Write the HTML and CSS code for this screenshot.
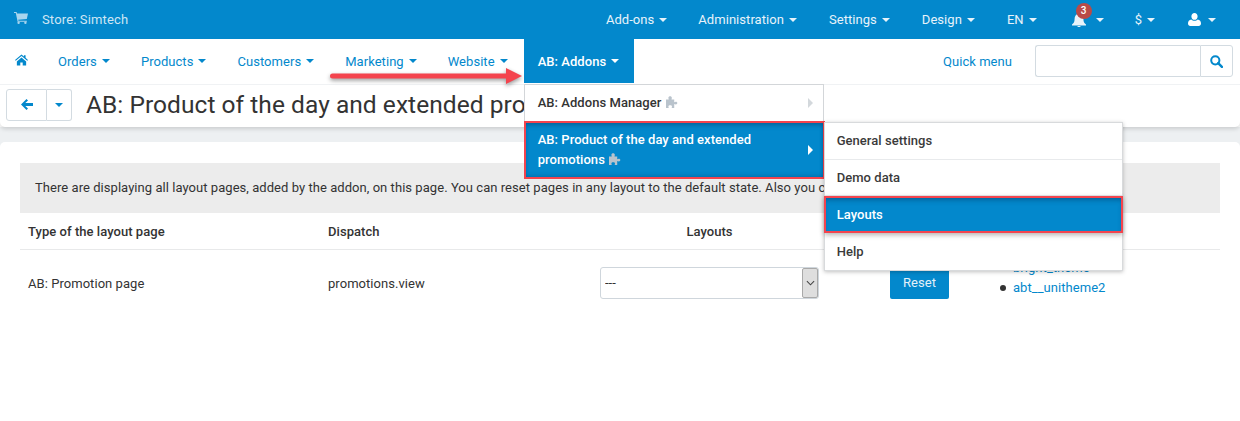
FILE: index.html
```html
<!DOCTYPE html>
<html lang="en">
<head>
<meta charset="utf-8">
<title>AB: Product of the day and extended promotions</title>
<link rel="stylesheet" href="styles.css">
</head>
<body>
<svg class="defs" width="0" height="0" aria-hidden="true">
  <symbol id="puzzle" viewBox="0 0 16 14"><path d="M1 4h3.2C4.2 3.4 3.8 3 3.8 2.2 3.8 1 4.8.4 5.8.4s2 .6 2 1.8c0 .8-.4 1.2-.4 1.8h3.2v3.2c.6 0 1-.5 1.9-.5 1.1 0 1.7.8 1.7 1.6s-.6 1.6-1.7 1.6c-.9 0-1.3-.5-1.9-.5V14H7.6c0-.6.4-1 .4-1.7 0-1-.9-1.5-2.1-1.500s-2.100.5-2.100 1.500c0 .7.4 1.100.4 1.700H1z"/></symbol>
  <symbol id="caret-right" viewBox="0 0 6 12"><path d="M0 0l6 6-6 6z"/></symbol>
</svg>

<header class="topbar">
  <div class="store">
    <svg class="cart" viewBox="0 0 14 12"><path d="M0 0h2.600l.4 1.500h11l-1.200 5.400-8.600.8.3 1.100h8.400v1H3.600L1.800 1H0z"/><circle cx="4.600" cy="10.800" r="1.200"/><circle cx="11.400" cy="10.800" r="1.200"/></svg>
    <span>Store: Simtech</span>
  </div>
  <nav class="topnav">
    <a class="top-item t-addons">Add-ons<i class="caret"></i></a>
    <a class="top-item t-admin">Administration<i class="caret"></i></a>
    <a class="top-item t-settings">Settings<i class="caret"></i></a>
    <a class="top-item t-design">Design<i class="caret"></i></a>
    <a class="top-item t-lang">EN<i class="caret"></i></a>
    <a class="top-item t-bell">
      <span class="bell-wrap">
        <svg class="bell" viewBox="0 0 14 14"><path d="M7 0c.7 0 1 .5 1 1 2.300.5 3.400 2.300 3.400 5 0 3 1 4.300 2.600 5.600v.9H0v-.9C1.600 10.300 2.600 9 2.600 6c0-2.700 1.100-4.500 3.400-5 0-.5.300-1 1-1zM5.300 13h3.400c0 .6-.8 1-1.700 1s-1.700-.4-1.700-1z"/></svg>
        <b class="badge">3</b>
      </span><i class="caret"></i>
    </a>
    <a class="top-item t-cur">$<i class="caret"></i></a>
    <a class="top-item t-user">
      <svg class="user" viewBox="0 0 13 13"><path d="M6.500 0C8.300 0 9.600 1.500 9.600 3.400S8.300 6.800 6.500 6.800 3.400 5.300 3.400 3.400 4.700 0 6.500 0zM3.300 6.400c.8.800 1.900 1.300 3.200 1.300s2.400-.5 3.200-1.300C11.800 6.600 13 8.200 13 10.600 13 12 12 13 10.700 13H2.300C1 13 0 12 0 10.600 0 8.200 1.200 6.600 3.300 6.400z"/></svg><i class="caret"></i>
    </a>
  </nav>
</header>

<div class="mainbar">
  <nav class="mainnav">
    <a class="main-item home"><svg class="home-icon" viewBox="0 0 14 12"><path d="M7 0l2.600 2.200V1h1.800v2.700L14 6l-.8.9L7 1.700.8 6.900 0 6zM2 7.600L7 3.400l5 4.200V12H8.300V8.800H5.700V12H2z"/></svg></a>
    <a class="main-item">Orders<i class="caret"></i></a>
    <a class="main-item">Products<i class="caret"></i></a>
    <a class="main-item">Customers<i class="caret"></i></a>
    <a class="main-item">Marketing<i class="caret"></i></a>
    <a class="main-item">Website<i class="caret"></i></a>
    <div class="main-item active">AB: Addons<i class="caret"></i>
      <ul class="menu">
        <li class="menu-row">
          <span>AB: Addons Manager <svg class="puzzle"><use href="#puzzle"/></svg></span>
          <svg class="chev chev-muted"><use href="#caret-right"/></svg>
        </li>
        <li class="menu-row menu-row-on">
          <span>AB: Product of the day and extended promotions <svg class="puzzle"><use href="#puzzle"/></svg></span>
          <svg class="chev"><use href="#caret-right"/></svg>
          <ul class="submenu">
            <li class="sub-row">General settings</li>
            <li class="sub-row">Demo data</li>
            <li class="sub-row sub-row-on">Layouts</li>
            <li class="sub-row">Help</li>
          </ul>
        </li>
      </ul>
    </div>
  </nav>
  <div class="quick">
    <a class="quick-link">Quick menu</a>
    <div class="search">
      <input class="search-input" type="text" aria-label="Search">
      <span class="search-btn"><svg class="search-icon" viewBox="0 0 13 13"><circle cx="5.300" cy="5.300" r="4.100" fill="none" stroke="currentColor" stroke-width="2"/><path d="M8.200 8.200l3.700 3.700" stroke="currentColor" stroke-width="2.400" stroke-linecap="round"/></svg></span>
    </div>
  </div>
  <svg class="arrow" viewBox="0 0 192 16" aria-hidden="true"><path d="M2.500 5.500H176V0l16 8-16 8v-5.500H2.500a2.500 2.500 0 0 1 0-5z"/></svg>
</div>

<div class="toolbar">
  <div class="btn-group">
    <a class="btn-back"><svg class="back-icon" viewBox="0 0 12 11"><path d="M5.500 0l1.500 1.500L4.300 4H12v3H4.300L7 9.500 5.500 11 0 5.500z"/></svg></a>
    <a class="btn-more"><i class="caret"></i></a>
  </div>
  <h1 class="title">AB: Product of the day and extended promotions</h1>
</div>

<div class="page">
  <main class="card">
    <p class="notice">There are displaying all layout pages, added by the addon, on this page. You can reset pages in any layout to the default state. Also you can edit the layout page or set it manually.</p>
    <div class="grid grid-head">
      <div>Type of the layout page</div>
      <div>Dispatch</div>
      <div class="layouts-head">Layouts</div>
      <div></div>
      <div></div>
    </div>
    <div class="grid grid-row">
      <div>AB: Promotion page</div>
      <div>promotions.view</div>
      <div class="select-wrap">
        <select class="select" aria-label="Layouts"><option>---</option></select>
        <span class="select-btn"><svg viewBox="0 0 10 6"><path d="M1 1l4 4 4-4" fill="none" stroke="#444" stroke-width="1.200"/></svg></span>
      </div>
      <div><a class="reset">Reset</a></div>
      <ul class="themes">
        <li><a>bright_theme</a></li>
        <li><a>abt__unitheme2</a></li>
      </ul>
    </div>
  </main>
</div>
</body>
</html>
```

FILE: styles.css
```css
* { box-sizing: border-box; }
html, body { margin: 0; padding: 0; }
body {
  width: 1240px;
  height: 421px;
  overflow: hidden;
  background: #fff;
  font-family: Roboto, "Liberation Sans", sans-serif;
  font-size: 13px;
  letter-spacing: .05px;
  color: #333;
}
.defs { position: absolute; }
ul { list-style: none; margin: 0; padding: 0; }
.caret {
  display: inline-block;
  width: 0;
  height: 0;
  margin-left: 5px;
  vertical-align: 2px;
  border-top: 4px solid currentColor;
  border-left: 4px solid transparent;
  border-right: 4px solid transparent;
}

/* top bar */
.topbar {
  display: flex;
  justify-content: space-between;
  align-items: center;
  height: 39px;
  padding: 0 24px 0 14px;
  background: #0388cc;
  color: #e8f3fa;
}
.store { display: flex; align-items: center; color: #cfe6f4; letter-spacing: .15px; }
.cart { width: 14px; height: 12px; margin-right: 14px; margin-top: -3px; fill: #a9d5ee; }
.topnav { display: flex; align-items: center; }
.top-item { display: flex; align-items: center; white-space: nowrap; }
.top-item .caret { margin-left: 5px; vertical-align: 0; }
.t-admin { margin-left: 31px; }
.t-settings { margin-left: 32px; }
.t-design { margin-left: 32px; }
.t-lang { margin-left: 32px; }
.t-bell { margin-left: 35px; }
.t-bell .caret { margin-left: 10px; }
.t-cur { margin-left: 31px; }
.t-user { margin-left: 33px; }
.t-user .caret { margin-left: 7px; }
.bell-wrap { position: relative; display: block; width: 14px; height: 14px; }
.bell { display: block; width: 14px; height: 14px; fill: #e8f3fa; }
.badge {
  position: absolute;
  top: -10px;
  left: 4px;
  width: 16px;
  height: 16px;
  border-radius: 50%;
  background: #b94a48;
  color: #fff;
  font-size: 10px;
  font-weight: 500;
  line-height: 16px;
  text-align: center;
}
.user { width: 13px; height: 13px; fill: #fff; }

/* main navigation */
.mainbar {
  position: relative;
  z-index: 3;
  display: flex;
  justify-content: space-between;
  height: 46px;
  border-bottom: 1px solid #f0f2f4;
  background: #fff;
}
.mainnav { display: flex; gap: 3px; height: 44px; padding-left: 1px; }
.main-item {
  position: relative;
  display: flex;
  align-items: center;
  height: 44px;
  padding: 0 14px;
  color: #0388cc;
  white-space: nowrap;
}
.main-item .caret { margin-left: 5px; }
.home { margin-right: -1px; }
.home-icon { width: 13px; height: 12px; fill: #0388cc; margin-top: -2px; }
.main-item.active {
  margin-left: -1px;
  padding-right: 15px;
  background: #0388cc;
  color: #fff;
  font-weight: 500;
}
.menu {
  position: absolute;
  top: 45px;
  left: 0;
  width: 300px;
  background: #fff;
  border: 1px solid #d3d6d9;
  font-weight: 500;
  color: #333;
  white-space: normal;
}
.menu-row {
  position: relative;
  display: flex;
  align-items: center;
  justify-content: space-between;
  min-height: 36px;
  padding: 0 10px 0 13px;
  line-height: 20px;
}
.menu-row > span { display: block; width: 250px; }
.menu-row-on {
  min-height: 58px;
  margin: 0 -2px -1px -1px;
  padding: 0 10px 0 12px;
  background: #0388cc;
  color: #fff;
  border: 2px solid #f4444e;
  box-shadow: inset 0 4px 5px -2px rgba(0, 50, 90, .45), inset 0 -3px 4px -2px rgba(0, 50, 90, .3);
}
.puzzle { width: 14px; height: 12px; fill: #b9c3cc; vertical-align: -1px; }
.chev { width: 5px; height: 10px; fill: #fff; flex: none; }
.chev-muted { fill: #d3d8dc; }
.submenu {
  position: absolute;
  top: -1px;
  left: 298px;
  width: 299px;
  background: #fff;
  border: 1px solid #d8dadc;
  box-shadow: 0 1px 4px rgba(0, 0, 0, .25);
  color: #3a3a3a;
}
.sub-row {
  display: flex;
  align-items: center;
  height: 37px;
  padding: 0 12px;
  border-bottom: 1px solid #e8eaec;
}
.sub-row:nth-child(2) { height: 36px; }
.sub-row:last-child { border-bottom: 0; }
.sub-row-on {
  margin: 0 -1px;
  padding: 0 11px;
  background: #0388cc;
  color: #fff;
  border: 2px solid #f4444e;
  box-shadow: inset 0 4px 5px -2px rgba(0, 50, 90, .45), 0 2px 5px rgba(0, 0, 0, .3);
}
.quick { display: flex; align-items: center; height: 44px; padding-right: 7px; }
.quick-link { margin-right: 23px; color: #0388cc; }
.search { display: flex; height: 32px; }
.search-input {
  width: 165px;
  height: 32px;
  border: 1px solid #d3dbe1;
  border-right: 0;
  border-radius: 3px 0 0 3px;
  outline: 0;
}
.search-btn {
  display: flex;
  align-items: center;
  justify-content: center;
  width: 33px;
  height: 32px;
  border: 1px solid #d3dbe1;
  border-radius: 0 3px 3px 0;
  color: #0388cc;
}
.search-icon { width: 13px; height: 13px; }
.arrow {
  position: absolute;
  top: 29px;
  left: 330px;
  width: 192px;
  height: 16px;
  fill: #f4444e;
  filter: drop-shadow(0 2px 2px rgba(0, 0, 0, .4));
}

/* toolbar */
.toolbar {
  position: relative;
  z-index: 2;
  display: flex;
  align-items: center;
  height: 42px;
  padding: 0 6px;
  background: #fff;
  border-radius: 0 0 5px 5px;
  box-shadow: 0 2px 4px rgba(0, 0, 0, .15);
}
.btn-group { display: flex; height: 32px; margin-right: 14px; margin-top: -3px; }
.btn-back, .btn-more {
  display: flex;
  align-items: center;
  justify-content: center;
  height: 32px;
  border: 1px solid #d3dbe1;
  color: #0388cc;
}
.btn-back { width: 41px; border-radius: 3px 0 0 3px; }
.btn-more { width: 25px; border-left: 0; border-radius: 0 3px 3px 0; }
.btn-more .caret { margin-left: 0; vertical-align: 0; }
.back-icon { width: 12px; height: 11px; fill: #0388cc; }
.title {
  margin: -3px 0 0;
  font-size: 24.500px;
  font-weight: 400;
  line-height: 30px;
  color: #333;
  white-space: nowrap;
}

/* content */
.page {
  height: 294px;
  padding-top: 15px;
  background: #edf0f2;
}
.card {
  height: 279px;
  padding: 21px 20px 0;
  background: #fff;
  border-radius: 5px 5px 0 0;
}
.notice {
  margin: 0;
  height: 50px;
  padding: 0 15px;
  background: #ececec;
  line-height: 50px;
  white-space: nowrap;
}
.grid {
  display: grid;
  grid-template-columns: 300px 272px 290px 110px 1fr;
  align-items: center;
  padding-left: 8px;
}
.grid-head {
  height: 37px;
  border-bottom: 1px solid #e8e9ea;
  font-weight: 500;
}
.layouts-head { width: 219px; text-align: center; }
.grid-row { height: 66px; }
.select-wrap { position: relative; width: 219px; height: 32px; margin-top: -1px; }
.select {
  display: block;
  width: 100%;
  height: 32px;
  padding: 0 4px;
  border: 1px solid #cfd6dc;
  border-radius: 3px;
  background: #fff;
  appearance: none;
  font: inherit;
  color: #333;
}
.select-btn {
  position: absolute;
  top: 1px;
  right: 1px;
  display: flex;
  align-items: center;
  justify-content: center;
  width: 16px;
  height: 30px;
  background: #dedede;
  border: 1px solid #a9a9a9;
  border-radius: 2px;
}
.select-btn svg { width: 9px; height: 6px; }
.reset {
  display: block;
  width: 59px;
  height: 32px;
  border-radius: 2px;
  background: #0388cc;
  color: #e3f1f9;
  line-height: 32px;
  text-align: center;
}
.themes { margin-top: -10px; line-height: 20px; }
.themes li { position: relative; padding-left: 13px; }
.themes li::before {
  content: "";
  position: absolute;
  top: 7px;
  left: 0;
  width: 6px;
  height: 6px;
  border-radius: 50%;
  background: #333;
}
.themes a { color: #0388cc; }
```
